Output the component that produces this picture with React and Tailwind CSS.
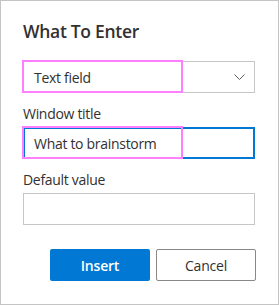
import React from 'react';

const Highlight = () => (
  <div className="pointer-events-none absolute -left-px -top-px h-[33px] w-[161px] border-2 border-[#ff80ff]"></div>
);

export default function App() {
  return (
    <div className="h-[305px] w-[279px] border border-[#c4c4c4] bg-white px-[22px] font-['Open_Sans',sans-serif] text-[#323130]">
      <h1 className="mt-[17px] text-[17.5px] font-semibold leading-[26px] tracking-[-0.3px]">What To Enter</h1>

      {/* Type dropdown */}
      <div className="relative mt-[17px]">
        <div className="flex h-[32px] w-[232px] items-center justify-between border border-[#c8c6c4] pl-[10px] pr-[9px] text-[14px] tracking-[-0.3px]">
          <span>Text field</span>
          <svg width="11" height="6" viewBox="0 0 11 6" fill="none" stroke="#605e5c" strokeWidth="1">
            <path d="M0.5 0.5 L5.5 5.5 L10.5 0.5" />
          </svg>
        </div>
        <Highlight />
      </div>

      {/* Window title */}
      <label className="mt-[11px] block text-[14px] leading-[20px] tracking-[-0.3px]">Window title</label>
      <div className="relative mt-[3px]">
        <div className="flex h-[32px] w-[232px] items-center border-2 border-[#0078d4] pl-[9px] text-[14px] tracking-[-0.3px]">
          What to brainstorm
        </div>
        <Highlight />
      </div>

      {/* Default value */}
      <label className="mt-[11px] block text-[14px] leading-[20px] tracking-[-0.3px]">Default value</label>
      <div className="mt-[3px] h-[32px] w-[232px] border border-[#c8c6c4]"></div>

      <div className="mt-[24px] flex justify-end gap-[6px]">
        <button className="h-[32px] w-[100px] rounded-[2px] bg-[#0078d4] text-[14px] font-semibold text-white tracking-[-0.2px]">
          Insert
        </button>
        <button className="h-[32px] w-[100px] rounded-[2px] border border-[#8a8886] bg-white text-[14px] text-[#323130] tracking-[-0.2px]">
          Cancel
        </button>
      </div>
    </div>
  );
}
